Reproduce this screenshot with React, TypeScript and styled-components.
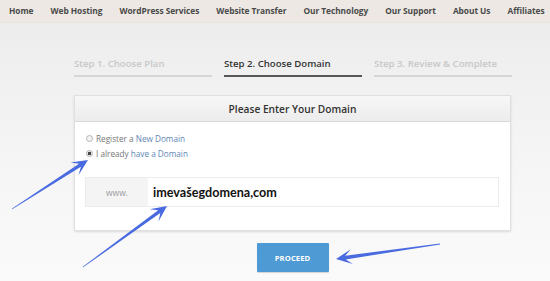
import React from "react";
import styled, { createGlobalStyle } from "styled-components";

const Global = createGlobalStyle`
  html, body { margin: 0; padding: 0; }
  body { font-family: "Open Sans", "Liberation Sans", sans-serif; background: #f4f4f4; }
  * { box-sizing: border-box; }
`;

const Page = styled.div`
  position: relative;
  width: 550px;
  height: 281px;
  overflow: hidden;
  display: flex;
  flex-direction: column;
  background: linear-gradient(#ebebeb 0px, #f1f1f1 90px, #f7f7f7 200px, #fafafa 281px);
`;

const Nav = styled.nav`
  height: 23px;
  flex: none;
  display: flex;
  align-items: center;
  gap: 17px;
  padding: 0 0 2px 9px;
  background: #ede8e3;
  border-bottom: 1px solid #e6e2dd;
`;

const NavItem = styled.span`
  font-size: 8.35px;
  font-weight: 700;
  color: #4a4a4a;
  white-space: nowrap;
  letter-spacing: -0.05px;
`;

const Main = styled.div`
  display: flex;
  flex-direction: column;
  padding: 34px 0 0 74px;
`;

const Steps = styled.div`
  display: flex;
  gap: 12px;
`;

const Step = styled.div<{ $active?: boolean }>`
  width: 138px;
  display: flex;
  flex-direction: column;
  gap: 5px;
  font-size: 9.6px;
  font-weight: 600;
  line-height: 13px;
  color: ${(p) => (p.$active ? "#333" : "#c8c8c8")};
  &::after {
    content: "";
    display: block;
    height: 2px;
    background: ${(p) => (p.$active ? "#575757" : "#d6d6d6")};
  }
`;

const Panel = styled.div`
  margin-top: 18px;
  width: 437px;
  background: #fff;
  border: 1px solid #e0e0e0;
  box-shadow: 0 1px 2px rgba(0, 0, 0, 0.12);
`;

const PanelHeader = styled.div`
  height: 26px;
  display: flex;
  align-items: center;
  justify-content: center;
  font-size: 10.2px;
  font-weight: 600;
  color: #333;
  background: linear-gradient(#f7f7f7, #ececec);
  border-bottom: 1px solid #d9d9d9;
`;

const PanelBody = styled.div`
  padding: 9px 11px 23px 10px;
  display: flex;
  flex-direction: column;
`;

const RadioRow = styled.label`
  display: flex;
  align-items: center;
  gap: 3px;
  height: 15px;
  font-size: 8.2px;
  color: #777;
`;

const Radio = styled.span<{ $checked?: boolean }>`
  width: 7px;
  height: 7px;
  border-radius: 50%;
  border: 1px solid #b5b5b5;
  background: ${(p) => (p.$checked ? "radial-gradient(circle, #444 0 1.6px, #e8e8e8 2px)" : "#f2f2f2")};
  margin-left: 1px;
`;

const Link = styled.span`
  color: #5f88b6;
`;

const InputGroup = styled.div`
  margin-top: 16px;
  display: flex;
  height: 30px;
  border: 1px solid #ececec;
`;

const Addon = styled.div`
  width: 62px;
  display: flex;
  align-items: center;
  justify-content: center;
  background: #f4f4f4;
  color: #9a9a9a;
  font-size: 8.5px;
`;

const InputText = styled.div`
  flex: 1;
  display: flex;
  align-items: center;
  padding-left: 5px;
  font-family: Lato, "Open Sans", sans-serif;
  font-size: 12.6px;
  font-weight: 700;
  color: #111;
  background: #fff;
`;

const ButtonRow = styled.div`
  width: 437px;
  display: flex;
  justify-content: center;
  margin-top: 12px;
`;

const Button = styled.div`
  width: 72px;
  height: 29px;
  display: flex;
  align-items: center;
  justify-content: center;
  background: #4d9ad4;
  color: #fff;
  font-size: 7.6px;
  font-weight: 700;
  letter-spacing: 0.1px;
  border-radius: 1px;
  box-shadow: 0 1px 1px rgba(0, 0, 0, 0.15);
`;

const Overlay = styled.svg`
  position: absolute;
  left: 0;
  top: 0;
  pointer-events: none;
`;

function arrowPoints(tx: number, ty: number, hx: number, hy: number) {
  const dx = hx - tx;
  const dy = hy - ty;
  const len = Math.hypot(dx, dy);
  const ux = dx / len;
  const uy = dy / len;
  const nx = -uy;
  const ny = ux;
  const L = 16;
  const W = 7.5;
  const neck = [hx - ux * L * 0.6, hy - uy * L * 0.6];
  const base = [hx - ux * L, hy - uy * L];
  const pts: number[][] = [
    [tx + nx * 0.4, ty + ny * 0.4],
    [neck[0] + nx * 1.8, neck[1] + ny * 1.8],
    [base[0] + nx * W, base[1] + ny * W],
    [hx, hy],
    [base[0] - nx * W, base[1] - ny * W],
    [neck[0] - nx * 1.8, neck[1] - ny * 1.8],
    [tx - nx * 0.4, ty - ny * 0.4],
  ];
  return pts.map((p) => `${p[0].toFixed(1)},${p[1].toFixed(1)}`).join(" ");
}

const navItems = [
  "Home",
  "Web Hosting",
  "WordPress Services",
  "Website Transfer",
  "Our Technology",
  "Our Support",
  "About Us",
  "Affiliates",
];

export default function App() {
  return (
    <>
      <Global />
      <Page>
        <Nav>
          {navItems.map((n) => (
            <NavItem key={n}>{n}</NavItem>
          ))}
        </Nav>
        <Main>
          <Steps>
            <Step>Step 1. Choose Plan</Step>
            <Step $active>Step 2. Choose Domain</Step>
            <Step>Step 3. Review &amp; Complete</Step>
          </Steps>
          <Panel>
            <PanelHeader>Please Enter Your Domain</PanelHeader>
            <PanelBody>
              <RadioRow>
                <Radio />
                <span>
                  Register a <Link>New Domain</Link>
                </span>
              </RadioRow>
              <RadioRow>
                <Radio $checked />
                <span>
                  I already <Link>have a Domain</Link>
                </span>
              </RadioRow>
              <InputGroup>
                <Addon>www.</Addon>
                <InputText>imevašegdomena,com</InputText>
              </InputGroup>
            </PanelBody>
          </Panel>
          <ButtonRow>
            <Button>PROCEED</Button>
          </ButtonRow>
        </Main>
        <Overlay width="550" height="281" viewBox="0 0 550 281">
          <polygon points={arrowPoints(12, 209, 88, 160)} fill="#4a6be0" />
          <polygon points={arrowPoints(83, 267, 167, 206)} fill="#4a6be0" />
          <polygon points={arrowPoints(440, 244, 336, 259)} fill="#4a6be0" />
        </Overlay>
      </Page>
    </>
  );
}
